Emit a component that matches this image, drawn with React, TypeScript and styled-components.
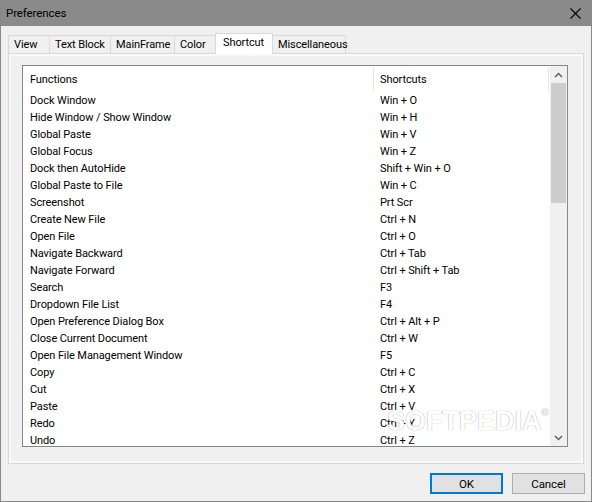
import React from 'react';
import styled, { createGlobalStyle } from 'styled-components';

const GlobalStyle = createGlobalStyle`
  html, body {
    margin: 0;
    padding: 0;
    background: #f0f0f0;
  }
  body {
    font-family: "Segoe UI", Roboto, "Noto Sans", sans-serif;
    font-size: 11px;
    letter-spacing: -0.1px;
    color: #000;
  }
`;

const tabs: [string, number][] = [
  ['View', 42],
  ['Text Block', 62],
  ['MainFrame', 65],
  ['Color', 42],
  ['Shortcut', 58],
  ['Miscellaneous', 74],
];

const shortcuts: [string, string][] = [
  ['Dock Window', 'Win + O'],
  ['Hide Window / Show Window', 'Win + H'],
  ['Global Paste', 'Win + V'],
  ['Global Focus', 'Win + Z'],
  ['Dock then AutoHide', 'Shift + Win + O'],
  ['Global Paste to File', 'Win + C'],
  ['Screenshot', 'Prt Scr'],
  ['Create New File', 'Ctrl + N'],
  ['Open File', 'Ctrl + O'],
  ['Navigate Backward', 'Ctrl + Tab'],
  ['Navigate Forward', 'Ctrl + Shift + Tab'],
  ['Search', 'F3'],
  ['Dropdown File List', 'F4'],
  ['Open Preference Dialog Box', 'Ctrl + Alt + P'],
  ['Close Current Document', 'Ctrl + W'],
  ['Open File Management Window', 'F5'],
  ['Copy', 'Ctrl + C'],
  ['Cut', 'Ctrl + X'],
  ['Paste', 'Ctrl + V'],
  ['Redo', 'Ctrl + Y'],
  ['Undo', 'Ctrl + Z'],
];

const App = () => {
  return (
    <>
      <GlobalStyle />
      <Window>
        <TitleBar>
          <Title>Preferences</Title>
          <CloseButton>
            <svg width="11" height="11" viewBox="0 0 11 11">
              <path d="M0.5 0.5 L10.5 10.5 M10.5 0.5 L0.5 10.5" stroke="#000" strokeWidth="1.1" fill="none" />
            </svg>
          </CloseButton>
        </TitleBar>
        <Content>
          <TabStrip>
            {tabs.map(([t, w]) => (
              <Tab key={t} $w={w} $active={t === 'Shortcut'}>{t}</Tab>
            ))}
          </TabStrip>
          <Panel>
            <ListBox>
              <ListArea>
                <HeaderRow>
                  <HeaderCell>Functions</HeaderCell>
                  <HeaderCell $divider>Shortcuts</HeaderCell>
                </HeaderRow>
                {shortcuts.map(([fn, key]) => (
                  <Row key={fn}>
                    <Cell>{fn}</Cell>
                    <Cell>{key}</Cell>
                  </Row>
                ))}
                <Watermark>SOFTPEDIA<sup>®</sup></Watermark>
              </ListArea>
              <ScrollBar>
                <ScrollArrow>
                  <svg width="9" height="6" viewBox="0 0 9 6">
                    <polyline points="1,5 4.5,1.5 8,5" stroke="#606060" strokeWidth="1.5" fill="none" />
                  </svg>
                </ScrollArrow>
                <Thumb />
                <Track />
                <ScrollArrow>
                  <svg width="9" height="6" viewBox="0 0 9 6">
                    <polyline points="1,1 4.5,4.5 8,1" stroke="#606060" strokeWidth="1.5" fill="none" />
                  </svg>
                </ScrollArrow>
              </ScrollBar>
            </ListBox>
          </Panel>
          <Footer>
            <Button $primary>OK</Button>
            <Button>Cancel</Button>
          </Footer>
        </Content>
      </Window>
    </>
  );
};

export default App;

const Window = styled.div`
  width: 592px;
  height: 502px;
  box-sizing: border-box;
  border: 1px solid #888888;
  border-top: none;
  background: #f0f0f0;
  display: flex;
  flex-direction: column;
  overflow: hidden;
`;

const TitleBar = styled.div`
  height: 26px;
  flex: none;
  background: #8a8a8a;
  display: flex;
  align-items: center;
  justify-content: space-between;
  padding: 0 10px 0 5px;
`;

const Title = styled.div`
  font-size: 11.5px;
  color: #000;
  line-height: 16px;
`;

const CloseButton = styled.div`
  width: 11px;
  height: 11px;
  display: flex;
  margin-top: 1px;
`;

const Content = styled.div`
  flex: 1;
  display: flex;
  flex-direction: column;
  padding: 7px 7px 0 7px;
`;

const TabStrip = styled.div`
  height: 20px;
  display: flex;
  align-items: flex-end;
  position: relative;
  z-index: 1;
`;

const Tab = styled.div<{ $active?: boolean; $w: number }>`
  box-sizing: border-box;
  width: ${(p) => p.$w}px;
  height: ${(p) => (p.$active ? '21px' : '18px')};
  margin-bottom: ${(p) => (p.$active ? '-1px' : '0')};
  margin-left: -1px;
  padding: ${(p) => (p.$active ? '0 0 3px 7px' : '0 0 0 5px')};
  border: 1px solid #d9d9d9;
  border-bottom: none;
  background: ${(p) => (p.$active ? '#ffffff' : '#f0f0f0')};
  display: flex;
  align-items: center;
  line-height: 16px;
  white-space: nowrap;

  &:first-child {
    margin-left: 0;
  }
`;

const Panel = styled.div`
  box-sizing: border-box;
  height: 411px;
  border: 1px solid #d9d9d9;
  background: #f0f0f0;
  box-shadow: inset 0 0 0 2px #f9f9f9;
  padding: 11px 15px 0 13px;
`;

const ListBox = styled.div`
  box-sizing: border-box;
  width: 546px;
  height: 382px;
  border: 1px solid #828790;
  background: #ffffff;
  display: flex;
  overflow: hidden;
`;

const ListArea = styled.div`
  flex: 1;
  overflow: hidden;
  position: relative;
`;

const HeaderRow = styled.div`
  display: grid;
  grid-template-columns: 350px 176px;
  height: 26px;
`;

const HeaderCell = styled.div<{ $divider?: boolean }>`
  display: flex;
  align-items: center;
  padding-left: 7px;
  ${(p) => (p.$divider ? 'border-left: 1px solid #e5e5e5; border-right: 1px solid #e5e5e5; padding-left: 6px;' : '')}
  margin: 1px 0 1px;
`;

const Row = styled.div`
  display: grid;
  grid-template-columns: 350px 176px;
  height: 17px;
  line-height: 17px;
`;

const Cell = styled.div`
  padding-left: 7px;
  white-space: nowrap;
  overflow: hidden;
`;

const Watermark = styled.div`
  position: absolute;
  left: 364px;
  top: 342px;
  font-family: "Liberation Sans", Arial, sans-serif;
  font-weight: bold;
  font-size: 27px;
  line-height: 27px;
  letter-spacing: 0;
  color: #ffffff;
  text-shadow: 0 0 1px rgba(0, 0, 0, 0.3), 0 0 1px rgba(0, 0, 0, 0.2);
  pointer-events: none;

  sup {
    font-size: 10px;
    vertical-align: top;
    line-height: 10px;
  }
`;

const ScrollBar = styled.div`
  width: 17px;
  flex: none;
  background: #f0f0f0;
  display: flex;
  flex-direction: column;
`;

const ScrollArrow = styled.div`
  height: 17px;
  flex: none;
  display: flex;
  align-items: center;
  justify-content: center;
`;

const Thumb = styled.div`
  height: 120px;
  margin: 0 1px;
  background: #cdcdcd;
`;

const Track = styled.div`
  flex: 1;
`;

const Footer = styled.div`
  display: flex;
  justify-content: flex-end;
  gap: 9px;
  padding-top: 9px;
  margin-right: -1px;
`;

const Button = styled.div<{ $primary?: boolean }>`
  box-sizing: border-box;
  width: 73px;
  height: 21px;
  display: flex;
  align-items: center;
  justify-content: center;
  background: #e1e1e1;
  border: ${(p) => (p.$primary ? '2px solid #0078d7' : '1px solid #adadad')};
  font-size: 11.5px;
`;
